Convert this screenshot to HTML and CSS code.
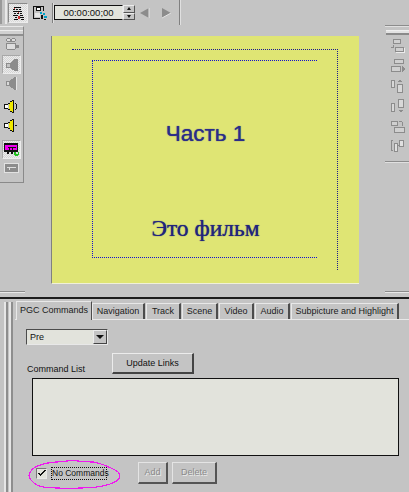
FILE: index.html
```html
<!DOCTYPE html>
<html lang="en">
<head>
<meta charset="utf-8">
<title>PGC Commands</title>
<link rel="stylesheet" href="styles.css">
</head>
<body>
<div class="app">
  <header class="topbar">
    <span class="grip-v"></span>
    <span class="tool tool-pressed">
      <svg width="15" height="15" viewBox="0 0 15 15" shape-rendering="crispEdges"><path d="M3 1h7v1H3zM2 3h2v1H2zM5 3h2v1H5zM8 3h2v1H8zM2 5h9v1H2zM3 7h2v1H3zM6 7h2v1H6zM9 7h2v1H9zM2 9h5v1H2zM9 9h3v1H9zM4 11h2v1H4zM9 11h4v1H9zM3 13h4v1H3zM10 13h3v1h-3z" fill="#111"/><path d="M3 2h1v1H3zM7 6h1v1H7zM7 10h2v3H7z" fill="#c33"/></svg>
    </span>
    <span class="tool">
      <svg width="16" height="16" viewBox="0 0 16 16" shape-rendering="crispEdges"><path d="M1 1h11v1H1zM1 2h1v12H1zM11 2h1v4h-1zM2 13h6v1H2zM4 2h5v4H4z" fill="#111"/><path d="M5 3h3v2H5z" fill="#fff"/><path d="M3 8h5v4H3z" fill="#e8e8e8"/><path d="M8 7h2v2H8zM11 8h2v2h-2zM12 11h3v2h-3z" fill="#00a0c8"/><path d="M9 10h2v4H9z" fill="#111"/><path d="M12 14h2v1h-2z" fill="#111"/></svg>
    </span>
    <span class="sep"></span>
    <span class="time">00:00:00;00</span>
    <span class="spin">
      <span class="spin-btn"><i class="arrow-up"></i></span>
      <span class="spin-btn"><i class="arrow-down"></i></span>
    </span>
    <svg class="nav-left" width="11" height="12" viewBox="0 0 11 12"><path d="M10 1v10L1 6z" fill="#8c8c8c"/><path d="M10 1v10" stroke="#e4e4e4"/></svg>
    <svg class="nav-right" width="11" height="12" viewBox="0 0 11 12"><path d="M1 1v10l9-5z" fill="#8c8c8c"/><path d="M1 11l9-5" stroke="#e4e4e4"/></svg>
    <span class="sep sep-end"></span>
  </header>

  <main class="workspace">
    <div class="work-row">
      <aside class="lefttools">
        <span class="grip-h"></span>
        <span class="ltool">
          <svg width="16" height="14" viewBox="0 0 16 14" shape-rendering="crispEdges"><path d="M3 1h3v1H3zM8 1h3v1H8zM2 2h1v2H2zM6 2h2v2H6zM11 2h1v2h-1zM3 4h8v1H3zM2 6h10v1H2zM2 7h1v5H2zM11 7h1v1h3v3h-3v1h-1zM3 12h8v1H3z" fill="#8a8a8a"/><path d="M3 7h8v5H3zM3 2h3v2H3zM8 2h3v2H8z" fill="#dedede"/></svg>
        </span>
        <span class="ltool ltool-pressed">
          <svg width="14" height="16" viewBox="0 0 14 16" shape-rendering="crispEdges"><path d="M1 6h4l5-4h3v12h-3L5 11H1z" fill="#8c8c8c"/><path d="M2 7h3v3H2z" fill="#c4c4c4"/></svg>
        </span>
        <span class="ltool">
          <svg width="14" height="16" viewBox="0 0 14 16" shape-rendering="crispEdges"><path d="M1 6h3l6-4h1v13h-1L4 11H1z" fill="#8c8c8c"/><path d="M2 7h2v3H2z" fill="#d8d8d8"/><path d="M11 2h1v13h-1z" fill="#e4e4e4"/></svg>
        </span>
        <span class="ltool">
          <svg width="15" height="14" viewBox="0 0 15 14" shape-rendering="crispEdges"><path d="M0 5h4v1H0zM0 6h1v3H0zM0 9h4v1H0zM4 4h2V2h2V1h2v13H8v-1H6v-2H4v-1h1V5H4z" fill="#111"/><path d="M1 6h3v3H1z" fill="#fff"/><path d="M5 5h1V3h2V2h1v11H8v-1H6v-2H5z" fill="#f0e800"/><path d="M11 4h1v1h-1zM12 5h1v5h-1zM11 10h1v1h-1z" fill="#111"/></svg>
        </span>
        <span class="ltool">
          <svg width="15" height="14" viewBox="0 0 15 14" shape-rendering="crispEdges"><path d="M0 5h4v1H0zM0 6h1v3H0zM0 9h4v1H0zM4 4h2V2h2V1h2v13H8v-1H6v-2H4v-1h1V5H4z" fill="#111"/><path d="M1 6h3v3H1z" fill="#fff"/><path d="M5 5h1V3h2V2h1v11H8v-1H6v-2H5z" fill="#f0e800"/><path d="M11 7h2v1h-2z" fill="#111"/></svg>
        </span>
        <span class="ltool ltool-pressed">
          <svg width="15" height="13" viewBox="0 0 15 13" shape-rendering="crispEdges"><path d="M0 0h14v9H9v2H7V9H5v2H3V9H0z" fill="#111"/><path d="M1 2h12v5H1z" fill="#f000f0"/><path d="M4 4h8v1H4zM5 5h1v2H5zM8 5h1v2H8z" fill="#111"/><path d="M10 9h2v2h2V9h1v3h-1v1h-3v-1h-1z" fill="#1fc01f"/></svg>
        </span>
        <span class="ltool">
          <svg width="15" height="10" viewBox="0 0 15 10" shape-rendering="crispEdges"><path d="M0 0h15v10H0z" fill="#e2e2e2"/><path d="M1 1h13v8H1z" fill="#8c8c8c"/><path d="M3 4h9v1H3zM5 5h1v2H5z" fill="#dedede"/></svg>
        </span>
      </aside>

      <section class="preview">
        <span class="guide guide-outer"></span>
        <span class="guide guide-inner"></span>
        <p class="title-main">Часть 1</p>
        <p class="title-sub">Это фильм</p>
      </section>

      <aside class="righttools">
        <span class="rline"></span>
        <span class="rline-double"></span>
        <svg class="align" width="14" height="14" viewBox="0 0 14 14" shape-rendering="crispEdges"><path d="M2 0h8v5H2zM2 6h1v3H0V8h2zM4 8h9v5H4z" fill="#8c8c8c"/><path d="M3 1h6v3H3zM5 9h7v3H5z" fill="#d0d0d0"/><path d="M13 9h1v5H5v-1h8z" fill="#ececec"/></svg>
        <svg class="align" width="14" height="14" viewBox="0 0 14 14" shape-rendering="crispEdges"><path d="M3 0h10v5H3zM0 7h10v6H0zM11 7l3 3-3 3z" fill="#8c8c8c"/><path d="M4 1h8v3H4zM1 8h8v4H1z" fill="#d0d0d0"/></svg>
        <svg class="align" width="14" height="14" viewBox="0 0 14 14" shape-rendering="crispEdges"><path d="M0 1h4v8H0zM6 5h6v9H6zM7 3h4V2H10V1H8v1H7z" fill="#8c8c8c"/><path d="M1 2h2v6H1zM7 6h4v7H7z" fill="#d8d8d8"/></svg>
        <svg class="align" width="14" height="15" viewBox="0 0 14 15" shape-rendering="crispEdges"><path d="M0 4h4v9H0zM7 0h6v9H7zM8 11h4v1h-1v1h-2v-1H8z" fill="#8c8c8c"/><path d="M1 5h2v7H1zM8 1h4v7H8z" fill="#d8d8d8"/></svg>
        <svg class="align" width="14" height="13" viewBox="0 0 14 13" shape-rendering="crispEdges"><path d="M0 1h7v5H0zM8 1h3v1H8zM11 2h1v4h-1zM3 7h11v6H3z" fill="#8c8c8c"/><path d="M1 2h5v3H1zM4 8h9v4H4z" fill="#d0d0d0"/></svg>
        <svg class="align" width="14" height="13" viewBox="0 0 14 13" shape-rendering="crispEdges"><path d="M0 1h2v1H1v9h1v1H0zM3 4h4v9H3zM8 1h5v7H8zM7 6h1v1H7z" fill="#8c8c8c"/><path d="M4 5h2v7H4zM9 2h3v5H9z" fill="#e0e0e0"/></svg>
        <span class="rline rline-end"></span>
      </aside>
    </div>
    <div class="dock-edges">
      <span class="dock-edge dock-edge-left"></span>
      <span class="dock-edge dock-edge-right"></span>
    </div>
  </main>

  <section class="panel">
    <div class="panel-grip"><span></span><span></span></div>
    <div class="panel-main">
      <nav class="tabs">
        <span class="tab tab-active tab-pgc">PGC Commands</span>
        <span class="tab tab-nav">Navigation</span>
        <span class="tab tab-track">Track</span>
        <span class="tab tab-scene">Scene</span>
        <span class="tab tab-video">Video</span>
        <span class="tab tab-audio">Audio</span>
        <span class="tab tab-sub">Subpicture and Highlight</span>
      </nav>
      <div class="page">
        <div class="combo">
          <span class="combo-text">Pre</span>
          <span class="combo-btn"><i class="arrow-down arrow-black"></i></span>
        </div>
        <div class="list-head">
          <span class="list-label">Command List</span>
          <span class="btn btn-update">Update Links</span>
        </div>
        <div class="listbox"></div>
        <div class="footer">
          <span class="check">
            <svg width="8" height="6" viewBox="0 0 8 6" shape-rendering="crispEdges"><path d="M6 0h2v1H6zM5 1h2v1H5zM4 2h2v1H4zM0 3h2v1H0zM3 3h2v1H3zM1 4h3v1H1zM2 5h1v1H2z" fill="#111"/></svg>
          </span>
          <span class="check-label">No Commands</span>
          <span class="btn btn-disabled btn-add">Add</span>
          <span class="btn btn-disabled btn-delete">Delete</span>
          <svg class="ring" width="95" height="31" viewBox="0 0 95 31" shape-rendering="crispEdges"><path d="M2 15C3 10 9 6 16 4C24 2 32 2 40 1C48 0 58 2 66 2C73 3 80 6 86 9C91 11 93 14 93 16C93 20 87 23 80 25C70 28 60 28 52 28C46 29 40 29 32 28C24 28 14 28 10 25C5 22 2 19 2 15Z" fill="none" stroke="#f018f0" stroke-width="1.2"/></svg>
        </div>
      </div>
    </div>
  </section>
</div>
</body>
</html>
```
FILE: styles.css
```css
* { box-sizing: border-box; }
html, body { margin: 0; padding: 0; }
body {
  width: 409px;
  height: 492px;
  overflow: hidden;
  background: #c4c4c4;
  color: #111;
  font-family: "Liberation Sans", Arial, sans-serif;
  font-size: 9px;
}
.app { display: flex; flex-direction: column; width: 409px; height: 492px; }
i { display: block; }

/* top toolbar */
.topbar { display: flex; align-items: flex-start; height: 26px; }
.grip-v {
  width: 7px; height: 24px; flex: none;
  border-left: 2px solid #9a9a9a; border-right: 2px solid #e8e8e8;
  background: #c4c4c4;
}
.tool {
  display: flex; align-items: center; justify-content: center;
  width: 20px; height: 20px; margin-top: 3px; flex: none;
}
.tool-pressed {
  margin-left: 1px;
  border: 1px solid; border-color: #8a8a8a #ececec #ececec #8a8a8a;
  background: repeating-conic-gradient(#d8d8d8 0 25%, #ececec 0 50%) 0 0 / 2px 2px;
}
.tool + .tool { margin-left: 3px; width: 17px; }
.sep { width: 2px; height: 20px; margin: 3px 0 0 4px; background: #808080; border-right: 1px solid #e0e0e0; flex: none; }
.time {
  width: 69px; height: 15px; margin: 5px 0 0 0; flex: none;
  background: #e2e3dc;
  border: 1px solid #111; border-right-color: #e8e8e8;
  font-size: 9.5px; line-height: 14px; text-align: center;
}
.spin { display: flex; flex-direction: column; width: 12px; margin-top: 5px; flex: none; }
.spin-btn {
  display: flex; align-items: center; justify-content: center;
  height: 7.5px; background: #c4c4c4;
  border: 1px solid; border-color: #ececec #555 #555 #ececec;
}
.arrow-up { width: 0; height: 0; border: 2px solid transparent; border-top: 0; border-bottom: 3px solid #111; }
.arrow-down { width: 0; height: 0; border: 2px solid transparent; border-bottom: 0; border-top: 3px solid #111; }
.arrow-black { border-width: 4px 4px 0; }
.nav-left { margin: 7px 0 0 4px; flex: none; }
.nav-right { margin: 7px 0 0 11px; flex: none; }
.sep-end { margin: 0 0 0 7px; height: 25px; }

/* workspace */
.workspace { height: 271px; display: flex; flex-direction: column; flex: none; }
.work-row { display: flex; align-items: flex-start; height: 265px; flex: none; }
.lefttools {
  width: 24px; height: 157px; flex: none;
  display: flex; flex-direction: column; align-items: center;
  border-top: 1px solid #e8e8e8;
  border-right: 1px solid #8a8a8a; border-bottom: 1px solid #8a8a8a;
}
.grip-h {
  width: 100%; height: 6px; margin-top: 3px; flex: none;
  border-top: 1px solid #ececec; border-bottom: 2px solid #8f8f8f;
  background: #d0d0d0;
}
.ltool { display: flex; align-items: center; justify-content: center; width: 19px; height: 19px; flex: none; }
.ltool-pressed {
  background: repeating-conic-gradient(#d4d4d4 0 25%, #ececec 0 50%) 0 0 / 2px 2px;
  border: 1px solid; border-color: #a8a8a8 #ececec #ececec #a8a8a8;
}
.ltool:nth-of-type(2) { height: 16px; }
.ltool:nth-of-type(3) { margin-top: 3px; }
.ltool:nth-of-type(4) { height: 18px; }
.ltool:nth-of-type(5) { margin-top: 4px; height: 20px; }
.ltool:nth-of-type(6) { height: 18px; }
.ltool:nth-of-type(7) { margin-top: 6px; }
.ltool:nth-of-type(8) { height: 15px; margin-top: 1px; }

.preview {
  position: relative;
  width: 308px; height: 248px; margin: 10px 0 0 27px; flex: none;
  display: flex; flex-direction: column; align-items: center;
  background: #dfe574;
  border-left: 1px solid #808080; border-bottom: 1px solid #f0f0d8;
}
.guide { position: absolute; display: block; }
.guide-outer { left: 20px; top: 13px; width: 266px; height: 221px; border-top: 1px dotted #1a1a90; border-right: 1px dotted #1a1a90; }
.guide-inner { left: 40px; top: 24px; width: 225px; height: 198px; border: 1px dotted #1010d0; border-right: 0; }
.title-main {
  margin: 85px 0 0 0;
  font: 22.5px/26px "Liberation Sans", Arial, sans-serif;
  color: #2a2c88;
  text-shadow: 0 0 1px #2a2c88;
}
.title-sub {
  margin: 67px 0 0 0;
  font: 23.5px/28px "Liberation Serif", "Times New Roman", serif;
  color: #22247c;
  text-shadow: 0 0 1px #22247c;
}
.righttools {
  width: 24px; height: 130px; margin-left: 26px; flex: none;
  display: flex; flex-direction: column; align-items: center;
}
.rline { width: 100%; height: 2px; background: #8c8c8c; border-bottom: 1px solid #e0e0e0; flex: none; margin-top: -1px; }
.rline-double { width: 23px; margin-left: 1px; height: 5px; margin-top: 3px; background: #e2e2e2; border-top: 1px solid #efefef; border-bottom: 2px solid #8a8a8a; flex: none; }
.align { display: block; margin: 6px 0 0 2px; flex: none; }
.righttools .align:nth-of-type(1) { margin-top: 4px; }
.rline-end { margin-top: 9px; }

.dock-edges { display: flex; justify-content: space-between; align-items: flex-start; height: 6px; flex: none; }
.dock-edge { height: 2px; background: #8a8a8a; border-bottom: 1px solid #e8e8e8; }
.dock-edge-left { width: 25px; }
.dock-edge-right { width: 24px; }

/* bottom panel */
.panel { display: flex; flex: 1; border-top: 2px solid #1c1c1c; }
.panel-grip { width: 15px; display: flex; gap: 1px; padding: 3px 0 0 4px; flex: none; }
.panel-grip span { width: 4px; border-left: 2px solid #e6e6e6; border-right: 2px solid #8e8e8e; }
.panel-main { flex: 1; min-width: 0; }
.tabs { display: flex; align-items: flex-end; height: 20px; padding-top: 3px; }
.tab {
  display: block; height: 16px; flex: none;
  border-top: 1px solid #e8e8e8; border-left: 1px solid #e8e8e8; border-right: 2px solid #4c4c4c;
  line-height: 15px; text-align: center; white-space: nowrap;
  font-size: 9px; color: #1a1a1a;
}
.tab-active { height: 19px; position: relative; margin-bottom: -1px; line-height: 16px; background: #c4c4c4; border-right-width: 1px; }
.tab-pgc { width: 76px; margin-left: 1px; }
.tab-nav { width: 53px; }
.tab-track { width: 35px; margin-left: 1px; }
.tab-scene { width: 36px; margin-left: 1px; }
.tab-video { width: 35px; margin-left: 1px; }
.tab-audio { width: 35px; margin-left: 1px; }
.tab-sub { width: 108px; margin-left: 1px; }
.page { border-top: 1px solid #e8e8e8; padding-top: 9px; height: 173px; }
.combo {
  display: flex; justify-content: space-between; align-items: center;
  width: 82px; height: 16px; margin-left: 11px;
  background: #e2e3dc;
  border: 1px solid; border-color: #4c4c4c #e8e8e8 #e8e8e8 #4c4c4c;
  padding-left: 3px;
}
.combo-text { font-size: 9px; }
.combo-btn {
  display: flex; align-items: center; justify-content: center;
  width: 14px; height: 14px; background: #c4c4c4;
  border: 1px solid; border-color: #ececec #444 #444 #ececec;
}
.list-head { display: flex; align-items: flex-end; height: 21px; margin-top: 8px; margin-left: 12px; }
.list-label { width: 85px; font-size: 9px; line-height: 12px; margin-bottom: -1px; }
.btn {
  display: block; text-align: center; flex: none;
  border: 1px solid; border-color: #ececec #444 #444 #ececec;
  border-width: 1px 2px 2px 1px;
  font-size: 9px;
}
.btn-update { width: 82px; height: 21px; line-height: 18px; }
.listbox { width: 367px; height: 78px; margin: 4px 0 0 17px; background: #e2e3dc; border: 1px solid #111; }
.footer { position: relative; display: flex; align-items: center; height: 22px; margin-top: 6px; padding-left: 21px; }
.check {
  display: flex; align-items: center; justify-content: center;
  width: 11px; height: 11px; background: #e2e3dc; flex: none;
  border: 1px solid; border-color: #777 #e8e8e8 #e8e8e8 #777;
}
.check-label {
  width: 56px; height: 13px; margin-left: 4px; flex: none;
  border: 1px dotted #111; line-height: 11px; text-align: center; font-size: 8.5px; white-space: nowrap;
}
.btn-disabled {
  height: 22px; line-height: 19px; color: #8a8a8a; text-shadow: 1px 1px 0 #ececec;
  border-color: #e4e4e4 #555 #555 #e4e4e4;
}
.btn-add { width: 30px; margin-left: 31px; }
.btn-delete { width: 45px; margin-left: 4px; }
.ring { position: absolute; left: 12px; top: -2px; }
```
